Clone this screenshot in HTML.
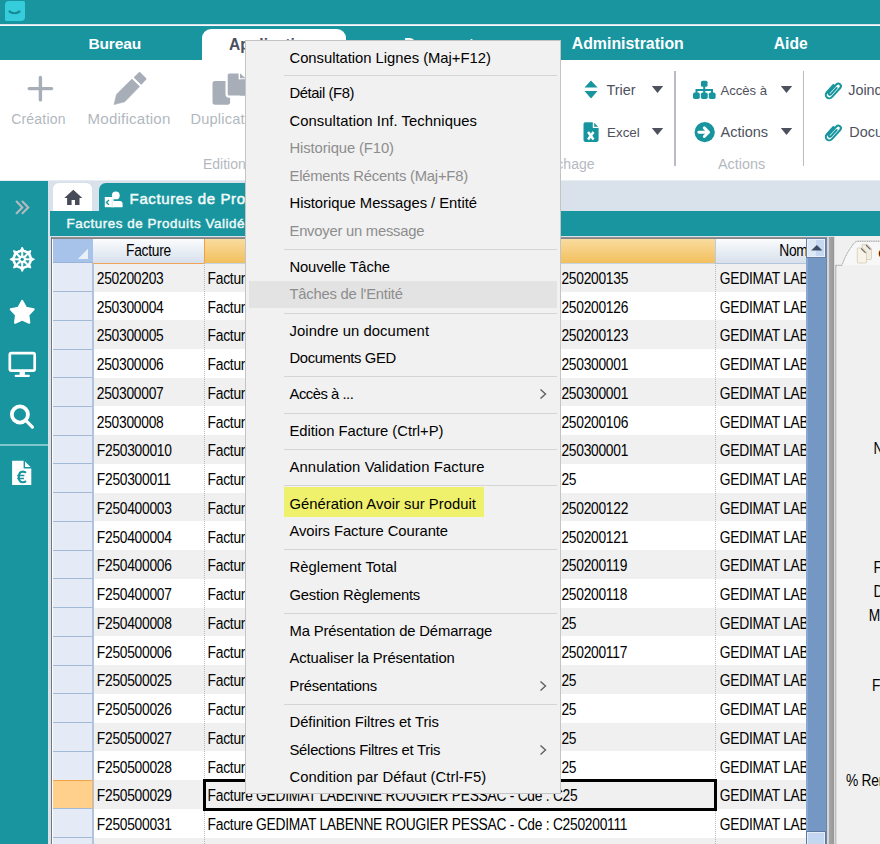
<!DOCTYPE html>
<html><head><meta charset="utf-8"><title>Factures</title>
<style>
html,body{margin:0;padding:0;}
body{width:880px;height:844px;overflow:hidden;position:relative;font-family:"Liberation Sans",sans-serif;}
.r{position:absolute;}
.t{position:absolute;white-space:pre;}
svg.r{overflow:visible;}
</style></head><body>
<div class="r" style="left:0.00px;top:0.00px;width:880.00px;height:844.00px;background:#d9e2ea;"></div>
<div class="r" style="left:0.00px;top:0.00px;width:880.00px;height:24.30px;background:#18959f;"></div>
<div class="r" style="left:4.50px;top:1.40px;width:20.00px;height:19.50px;background:#35cddb;border-radius:4px 1.5px 4px 1.5px;"></div>
<svg class="r" style="left:4px;top:1px;" width="21" height="20" viewBox="0 0 21 20"><path d="M5.5 10.5 Q10.5 14 15.5 10.5" stroke="#178a95" stroke-width="2.2" fill="none" stroke-linecap="round"/></svg>
<div class="r" style="left:0.00px;top:24.80px;width:880.00px;height:1.50px;background:#f4fafb;"></div>
<div class="r" style="left:0.00px;top:26.10px;width:880.00px;height:33.50px;background:#18959f;"></div>
<div class="t " style="top:36.08px;font-size:15.5px;line-height:15.5px;color:#ffffff;font-weight:bold;left:88.40px;letter-spacing:-0.1px;">Bureau</div>
<div class="r" style="left:201.80px;top:29.00px;width:144.60px;height:31.00px;background:#ffffff;border-radius:9px 9px 0 0;"></div>
<div class="t " style="top:36.69px;font-size:15.6px;line-height:15.6px;color:#4b4f5e;font-weight:bold;left:229.00px;">Applications</div>
<div class="t " style="top:37.39px;font-size:15.6px;line-height:15.6px;color:#ffffff;font-weight:bold;left:404.00px;letter-spacing:-0.9px;">Documents</div>
<div class="t " style="top:35.74px;font-size:15.9px;line-height:15.9px;color:#ffffff;font-weight:bold;left:571.70px;">Administration</div>
<div class="t " style="top:35.99px;font-size:15.6px;line-height:15.6px;color:#ffffff;font-weight:bold;left:773.80px;">Aide</div>
<div class="r" style="left:0.00px;top:59.60px;width:880.00px;height:120.00px;background:#ffffff;"></div>
<div class="r" style="left:0.00px;top:179.50px;width:880.00px;height:1.20px;background:#e6ecf1;"></div>
<svg class="r" style="left:24px;top:72px;" width="33" height="33" viewBox="24 72 33 33"><path d="M40.4 77.4 V99.9 M29.2 88.6 H51.6" stroke="#a7aeb8" stroke-width="3.4" stroke-linecap="round"/></svg>
<div class="t " style="top:112.15px;font-size:14.0px;line-height:14.0px;color:#b2b8c0;left:11.20px;letter-spacing:0.2px;">Création</div>
<svg class="r" style="left:108px;top:68px;" width="44" height="42" viewBox="108 68 44 42"><path d="M139.6 73 L145.6 79 L141.2 83.6 L134.9 77.4 Z" fill="#a7aeb8" stroke="#a7aeb8" stroke-width="1.8" stroke-linejoin="round"/><path d="M131.9 79.1 L139.6 86.6 L124.8 101.8 L114 104.6 L116.6 94.2 Z" fill="#a7aeb8" stroke="#a7aeb8" stroke-width="0.6" stroke-linejoin="round"/></svg>
<div class="t " style="top:111.22px;font-size:15.1px;line-height:15.1px;color:#b2b8c0;left:87.60px;letter-spacing:0.2px;">Modification</div>
<svg class="r" style="left:208px;top:68px;" width="40" height="40" viewBox="208 68 40 40"><rect x="212.5" y="81" width="17.6" height="23.7" rx="2.6" fill="#a7aeb8"/><rect x="226.6" y="72.4" width="24" height="24.2" rx="2.6" fill="#a7aeb8" stroke="#fff" stroke-width="2.2"/><path d="M238.6 70 V79.4 H252 V70 Z" fill="#fff"/><path d="M240 73.3 L245.5 78.3 H240 Z" fill="#a7aeb8"/><path d="M240.6 79.4 H252 V95.4 H240 Z" fill="#a7aeb8"/></svg>
<div class="t " style="top:111.64px;font-size:14.6px;line-height:14.6px;color:#b2b8c0;left:190.40px;letter-spacing:0.2px;">Duplication</div>
<div class="t " style="top:156.85px;font-size:14.0px;line-height:14.0px;color:#b4b9c0;left:203.00px;">Edition</div>
<div class="t " style="top:156.65px;font-size:14.0px;line-height:14.0px;color:#b4b9c0;right:285.50px;">Affichage</div>
<svg class="r" style="left:584px;top:80px;" width="14" height="19" viewBox="0 0 14 19"><path d="M7 0.5 L13.5 7.5 H0.5 Z M0.5 11 H13.5 L7 18.5 Z" fill="#17959e"/></svg>
<div class="t " style="top:82.91px;font-size:14.4px;line-height:14.4px;color:#4d515e;left:606.40px;">Trier</div>
<svg class="r" style="left:651px;top:85px;" width="13" height="9" viewBox="0 0 13 9"><path d="M0.8 1 H12.2 L6.5 8 Z" fill="#4d515e"/></svg>
<svg class="r" style="left:580px;top:119px;" width="22" height="26" viewBox="580 119 22 26"><path d="M583.5 124 Q583.5 122.2 585.3 122.2 H592.8 V127.9 H598.6 V140.1 Q598.6 141.9 596.8 141.9 H585.3 Q583.5 141.9 583.5 140.1 Z" fill="#17959e"/><path d="M594.2 122.7 L598.2 126.7 H594.2 Z" fill="#17959e"/><path d="M588.1 132 L593.5 139.5 M593.5 132 L588.1 139.5" stroke="#fff" stroke-width="2.5"/></svg>
<div class="t " style="top:125.96px;font-size:13.4px;line-height:13.4px;color:#4d515e;left:607.00px;">Excel</div>
<svg class="r" style="left:651px;top:127px;" width="13" height="9" viewBox="0 0 13 9"><path d="M0.8 1 H12.2 L6.5 8 Z" fill="#4d515e"/></svg>
<div class="r" style="left:674.00px;top:71.00px;width:1.50px;height:94.50px;background:#b9bdc3;"></div>
<svg class="r" style="left:692px;top:80px;" width="25" height="20" viewBox="0 0 25 20"><rect x="9" y="0.8" width="6.5" height="6" rx="1.5" fill="#17959e"/><path d="M12.2 6 V10 M4.5 13 V10 H20 V13 M12.2 10 V13" stroke="#17959e" stroke-width="2" fill="none"/><rect x="1" y="12.5" width="6.8" height="6.5" rx="1.8" fill="#17959e"/><rect x="8.9" y="12.5" width="6.8" height="6.5" rx="1.8" fill="#17959e"/><rect x="16.8" y="12.5" width="6.8" height="6.5" rx="1.8" fill="#17959e"/></svg>
<div class="t " style="top:84.01px;font-size:13.1px;line-height:13.1px;color:#4d515e;left:720.50px;">Accès à</div>
<svg class="r" style="left:780px;top:85px;" width="13" height="9" viewBox="0 0 13 9"><path d="M0.8 1 H12.2 L6.5 8 Z" fill="#4d515e"/></svg>
<svg class="r" style="left:692px;top:119px;" width="26" height="26" viewBox="692 119 26 26"><circle cx="704.7" cy="132.2" r="10.1" fill="#17959e"/><path d="M698.8 132.2 H708.2 M704.3 127.9 L708.6 132.2 L704.3 136.5" stroke="#fff" stroke-width="2.9" fill="none" stroke-linecap="round" stroke-linejoin="round"/></svg>
<div class="t " style="top:125.03px;font-size:14.5px;line-height:14.5px;color:#4d515e;left:720.50px;">Actions</div>
<svg class="r" style="left:780px;top:127px;" width="13" height="9" viewBox="0 0 13 9"><path d="M0.8 1 H12.2 L6.5 8 Z" fill="#4d515e"/></svg>
<div class="t " style="top:156.81px;font-size:14.4px;line-height:14.4px;color:#b4b9c0;left:718.00px;">Actions</div>
<div class="r" style="left:802.50px;top:71.00px;width:1.50px;height:94.50px;background:#b9bdc3;"></div>
<svg class="r" style="left:824px;top:79.5px;" width="19" height="21" viewBox="0 0 19 21"><g transform="translate(9.3,10.4) rotate(42) translate(0,-10.6)"><path d="M0.9 6.5 V15.2 A1.3 1.3 0 0 1 -1.7 15.2 V4.2 A2.6 2.6 0 0 1 3.5 4.2 V16.6 A3.5 3.5 0 0 1 -3.5 16.6 V6.5" stroke="#17959e" stroke-width="2" fill="none" stroke-linecap="round"/></g></svg>
<div class="t " style="top:83.31px;font-size:14.4px;line-height:14.4px;color:#4d515e;left:848.20px;">Joindre</div>
<svg class="r" style="left:824px;top:121.8px;" width="19" height="21" viewBox="0 0 19 21"><g transform="translate(9.3,10.4) rotate(42) translate(0,-10.6)"><path d="M0.9 6.5 V15.2 A1.3 1.3 0 0 1 -1.7 15.2 V4.2 A2.6 2.6 0 0 1 3.5 4.2 V16.6 A3.5 3.5 0 0 1 -3.5 16.6 V6.5" stroke="#17959e" stroke-width="2" fill="none" stroke-linecap="round"/></g></svg>
<div class="t " style="top:125.11px;font-size:14.4px;line-height:14.4px;color:#4d515e;left:849.30px;">Documents</div>
<div class="r" style="left:0.00px;top:180.70px;width:47.50px;height:663.30px;background:#18959f;"></div>
<svg class="r" style="left:12px;top:196px;" width="22" height="22" viewBox="12 196 22 22"><path d="M16.6 201.6 L22.3 207.4 L16.6 213.2 M22.5 201.6 L28.2 207.4 L22.5 213.2" stroke="#b6b9c0" stroke-width="2.1" fill="none" stroke-linecap="round"/></svg>
<svg class="r" style="left:6px;top:243px;" width="32" height="32" viewBox="6 243 32 32"><circle cx="22.2" cy="259.3" r="9.9" fill="#fff"/><path d="M34.50 259.30 L31.02 257.51 L31.02 261.09 Z M30.90 268.00 L29.70 264.27 L27.17 266.80 Z M22.20 271.60 L23.99 268.12 L20.41 268.12 Z M13.50 268.00 L17.23 266.80 L14.70 264.27 Z M9.90 259.30 L13.38 261.09 L13.38 257.51 Z M13.50 250.60 L14.70 254.33 L17.23 251.80 Z M22.20 247.00 L20.41 250.48 L23.99 250.48 Z M30.90 250.60 L27.17 251.80 L29.70 254.33 Z " fill="#fff" stroke="#fff" stroke-width="1" stroke-linejoin="round"/><path d="M25.80 260.79 L29.10 260.48 L27.92 263.34 Z M23.69 262.90 L26.24 265.02 L23.38 266.20 Z M20.71 262.90 L21.02 266.20 L18.16 265.02 Z M18.60 260.79 L16.48 263.34 L15.30 260.48 Z M18.60 257.81 L15.30 258.12 L16.48 255.26 Z M20.71 255.70 L18.16 253.58 L21.02 252.40 Z M23.69 255.70 L23.38 252.40 L26.24 253.58 Z M25.80 257.81 L27.92 255.26 L29.10 258.12 Z " fill="#18959f" stroke="#18959f" stroke-width="0.6" stroke-linejoin="round"/><circle cx="22.2" cy="259.3" r="1.6" fill="#18959f"/></svg>
<svg class="r" style="left:6px;top:296px;" width="32" height="32" viewBox="6 296 32 32"><path d="M22.20 301.00 L25.96 307.82 L33.61 309.29 L28.29 314.98 L29.25 322.71 L22.20 319.40 L15.15 322.71 L16.11 314.98 L10.79 309.29 L18.44 307.82 Z" fill="#fff" stroke="#fff" stroke-width="2.2" stroke-linejoin="round"/></svg>
<svg class="r" style="left:6px;top:348px;" width="32" height="32" viewBox="6 348 32 32"><rect x="9.8" y="353.1" width="24.9" height="17.6" rx="1.6" fill="none" stroke="#fff" stroke-width="2.7"/><rect x="19.6" y="371" width="5.3" height="4.5" fill="#fff"/><rect x="14.7" y="374.7" width="15.1" height="2.4" rx="0.8" fill="#fff"/></svg>
<svg class="r" style="left:6px;top:401px;" width="32" height="32" viewBox="6 401 32 32"><circle cx="19.9" cy="414.5" r="8.05" fill="none" stroke="#fff" stroke-width="3.8"/><path d="M25.5 420.2 L32.4 427.1" stroke="#fff" stroke-width="3.2" stroke-linecap="round"/></svg>
<div class="r" style="left:0.00px;top:444.20px;width:47.50px;height:1.40px;background:#7cc6cc;"></div>
<svg class="r" style="left:9px;top:457px;" width="26" height="31" viewBox="9 457 26 31"><path d="M12.1 460.8 H24.3 L31.3 467.8 V484.9 H12.1 Z" fill="#fff"/><path d="M24.3 460.2 V467.8 H31.9" fill="none" stroke="#18959f" stroke-width="1.4"/><path d="M26 472.8 Q24.8 471.6 22.8 471.6 Q19 471.6 18.8 477 Q19 482.3 22.8 482.3 Q24.8 482.3 26 481.1" fill="none" stroke="#18959f" stroke-width="2.1"/><path d="M17.2 475.6 H24.4 M17.2 478.4 H24" stroke="#18959f" stroke-width="1.5"/></svg>
<div class="r" style="left:52.70px;top:182.80px;width:39.00px;height:30.00px;background:#ffffff;border-radius:6px 6px 0 0;"></div>
<svg class="r" style="left:64px;top:189px;" width="19" height="17" viewBox="0 0 19 17"><path d="M9.3 0.8 L18.3 9 H15.5 V16 H11 V11 H7.6 V16 H3.1 V9 H0.3 Z" fill="#474b58"/></svg>
<div class="r" style="left:98.70px;top:182.50px;width:300.00px;height:30.00px;background:#18959f;border-radius:7px 7px 0 0;"></div>
<svg class="r" style="left:102px;top:188px;" width="24" height="22" viewBox="102 188 24 22"><circle cx="115.8" cy="195.4" r="3.9" fill="#fff"/><path d="M111.2 207.2 V203.5 Q111.2 201 113.7 201 H119.8 Q122.6 201 122.6 204 V207.2 Z" fill="#fff"/><rect x="104.8" y="197" width="8.8" height="10.2" fill="#fff"/><path d="M109 200 L106.4 202.4 L109 204.8" stroke="#18959f" stroke-width="1.3" fill="none"/><path d="M112.2 199 V207" stroke="#cfe9eb" stroke-width="0.8"/></svg>
<div class="t " style="top:190.90px;font-size:15.0px;line-height:15.0px;color:#f0fafa;left:129.60px;-webkit-text-stroke:0.5px #f0fafa;letter-spacing:0.62px;">Factures de Produits Validées</div>
<div class="r" style="left:50.00px;top:211.00px;width:830.00px;height:24.70px;background:#18959f;"></div>
<div class="t " style="top:217.26px;font-size:13.4px;line-height:13.4px;color:#eef8f8;left:66.60px;-webkit-text-stroke:0.45px #eef8f8;letter-spacing:0.55px;">Factures de Produits Validées</div>
<div class="r" style="left:51.00px;top:237.00px;width:776.00px;height:607.00px;background:#ffffff;"></div>
<div class="r" style="left:51.00px;top:237.00px;width:776.00px;height:2.00px;background:linear-gradient(#9a9a9a,#7e7e7e);"></div>
<div class="r" style="left:51.20px;top:237.00px;width:1.30px;height:607.00px;background:#767676;"></div>
<div class="r" style="left:52.60px;top:239.00px;width:40.40px;height:23.90px;background:#a7c3e9;"></div>
<svg class="r" style="left:77px;top:247.5px;" width="12" height="12" viewBox="0 0 12 12"><path d="M11 0.8 V11 H0.8 Z" fill="#e9f0f9"/></svg>
<div class="r" style="left:93.00px;top:239.00px;width:111.00px;height:23.70px;background:linear-gradient(#fbfcfe,#d7e0eb);"></div>
<div class="t " style="top:244.52px;font-size:13.8px;line-height:13.8px;color:#000;left:-151.50px;width:600px;text-align:center;letter-spacing:-0.26px;transform:scaleY(1.15);transform-origin:0 11.68px;">Facture</div>
<div class="r" style="left:204.00px;top:239.00px;width:511.00px;height:23.70px;background:linear-gradient(#fadc9f,#f2bf5d);"></div>
<div class="r" style="left:203.70px;top:239.00px;width:1.30px;height:24.50px;background:#f0a040;"></div>
<div class="r" style="left:715.00px;top:239.00px;width:91.50px;height:23.70px;background:linear-gradient(#fbfcfe,#d7e0eb);"></div>
<div class="r" style="left:715.00px;top:239.00px;width:1.10px;height:23.70px;background:#b9cde1;"></div>
<div class="t " style="top:244.52px;font-size:13.8px;line-height:13.8px;color:#000;right:72.40px;letter-spacing:-0.26px;transform:scaleY(1.15);transform-origin:0 11.68px;">Nom</div>
<div class="r" style="left:93.60px;top:262.80px;width:712.90px;height:28.74px;background:#f0f0f0;"></div>
<div class="r" style="left:52.60px;top:262.80px;width:40.00px;height:28.74px;background:#e4ebf6;"></div>
<div class="t " style="top:272.92px;font-size:13.8px;line-height:13.8px;color:#000;left:96.80px;letter-spacing:-0.26px;transform:scaleY(1.15);transform-origin:0 11.68px;">250200203</div>
<div class="t " style="top:272.92px;font-size:13.8px;line-height:13.8px;color:#000;left:207.60px;letter-spacing:-0.26px;transform:scaleY(1.15);transform-origin:0 11.68px;">Facture GEDIMAT</div>
<div class="t " style="top:272.92px;font-size:13.8px;line-height:13.8px;color:#000;left:561.40px;letter-spacing:-0.26px;transform:scaleY(1.15);transform-origin:0 11.68px;">250200135</div>
<div class="t " style="top:272.92px;font-size:13.8px;line-height:13.8px;color:#000;left:719.80px;letter-spacing:-0.26px;transform:scaleY(1.15);transform-origin:0 11.68px;width:86px;overflow:hidden;white-space:nowrap;">GEDIMAT LABENNE</div>
<div class="r" style="left:93.60px;top:291.54px;width:712.90px;height:28.74px;background:#ffffff;"></div>
<div class="r" style="left:52.60px;top:291.54px;width:40.00px;height:28.74px;background:#e4ebf6;"></div>
<div class="t " style="top:301.66px;font-size:13.8px;line-height:13.8px;color:#000;left:96.80px;letter-spacing:-0.26px;transform:scaleY(1.15);transform-origin:0 11.68px;">250300004</div>
<div class="t " style="top:301.66px;font-size:13.8px;line-height:13.8px;color:#000;left:207.60px;letter-spacing:-0.26px;transform:scaleY(1.15);transform-origin:0 11.68px;">Facture GEDIMAT</div>
<div class="t " style="top:301.66px;font-size:13.8px;line-height:13.8px;color:#000;left:561.40px;letter-spacing:-0.26px;transform:scaleY(1.15);transform-origin:0 11.68px;">250200126</div>
<div class="t " style="top:301.66px;font-size:13.8px;line-height:13.8px;color:#000;left:719.80px;letter-spacing:-0.26px;transform:scaleY(1.15);transform-origin:0 11.68px;width:86px;overflow:hidden;white-space:nowrap;">GEDIMAT LABENNE</div>
<div class="r" style="left:93.60px;top:320.28px;width:712.90px;height:28.74px;background:#f0f0f0;"></div>
<div class="r" style="left:52.60px;top:320.28px;width:40.00px;height:28.74px;background:#e4ebf6;"></div>
<div class="t " style="top:330.40px;font-size:13.8px;line-height:13.8px;color:#000;left:96.80px;letter-spacing:-0.26px;transform:scaleY(1.15);transform-origin:0 11.68px;">250300005</div>
<div class="t " style="top:330.40px;font-size:13.8px;line-height:13.8px;color:#000;left:207.60px;letter-spacing:-0.26px;transform:scaleY(1.15);transform-origin:0 11.68px;">Facture GEDIMAT</div>
<div class="t " style="top:330.40px;font-size:13.8px;line-height:13.8px;color:#000;left:561.40px;letter-spacing:-0.26px;transform:scaleY(1.15);transform-origin:0 11.68px;">250200123</div>
<div class="t " style="top:330.40px;font-size:13.8px;line-height:13.8px;color:#000;left:719.80px;letter-spacing:-0.26px;transform:scaleY(1.15);transform-origin:0 11.68px;width:86px;overflow:hidden;white-space:nowrap;">GEDIMAT LABENNE</div>
<div class="r" style="left:93.60px;top:349.02px;width:712.90px;height:28.74px;background:#ffffff;"></div>
<div class="r" style="left:52.60px;top:349.02px;width:40.00px;height:28.74px;background:#e4ebf6;"></div>
<div class="t " style="top:359.14px;font-size:13.8px;line-height:13.8px;color:#000;left:96.80px;letter-spacing:-0.26px;transform:scaleY(1.15);transform-origin:0 11.68px;">250300006</div>
<div class="t " style="top:359.14px;font-size:13.8px;line-height:13.8px;color:#000;left:207.60px;letter-spacing:-0.26px;transform:scaleY(1.15);transform-origin:0 11.68px;">Facture GEDIMAT</div>
<div class="t " style="top:359.14px;font-size:13.8px;line-height:13.8px;color:#000;left:561.40px;letter-spacing:-0.26px;transform:scaleY(1.15);transform-origin:0 11.68px;">250300001</div>
<div class="t " style="top:359.14px;font-size:13.8px;line-height:13.8px;color:#000;left:719.80px;letter-spacing:-0.26px;transform:scaleY(1.15);transform-origin:0 11.68px;width:86px;overflow:hidden;white-space:nowrap;">GEDIMAT LABENNE</div>
<div class="r" style="left:93.60px;top:377.76px;width:712.90px;height:28.74px;background:#f0f0f0;"></div>
<div class="r" style="left:52.60px;top:377.76px;width:40.00px;height:28.74px;background:#e4ebf6;"></div>
<div class="t " style="top:387.88px;font-size:13.8px;line-height:13.8px;color:#000;left:96.80px;letter-spacing:-0.26px;transform:scaleY(1.15);transform-origin:0 11.68px;">250300007</div>
<div class="t " style="top:387.88px;font-size:13.8px;line-height:13.8px;color:#000;left:207.60px;letter-spacing:-0.26px;transform:scaleY(1.15);transform-origin:0 11.68px;">Facture GEDIMAT</div>
<div class="t " style="top:387.88px;font-size:13.8px;line-height:13.8px;color:#000;left:561.40px;letter-spacing:-0.26px;transform:scaleY(1.15);transform-origin:0 11.68px;">250300001</div>
<div class="t " style="top:387.88px;font-size:13.8px;line-height:13.8px;color:#000;left:719.80px;letter-spacing:-0.26px;transform:scaleY(1.15);transform-origin:0 11.68px;width:86px;overflow:hidden;white-space:nowrap;">GEDIMAT LABENNE</div>
<div class="r" style="left:93.60px;top:406.50px;width:712.90px;height:28.74px;background:#ffffff;"></div>
<div class="r" style="left:52.60px;top:406.50px;width:40.00px;height:28.74px;background:#e4ebf6;"></div>
<div class="t " style="top:416.62px;font-size:13.8px;line-height:13.8px;color:#000;left:96.80px;letter-spacing:-0.26px;transform:scaleY(1.15);transform-origin:0 11.68px;">250300008</div>
<div class="t " style="top:416.62px;font-size:13.8px;line-height:13.8px;color:#000;left:207.60px;letter-spacing:-0.26px;transform:scaleY(1.15);transform-origin:0 11.68px;">Facture GEDIMAT</div>
<div class="t " style="top:416.62px;font-size:13.8px;line-height:13.8px;color:#000;left:561.40px;letter-spacing:-0.26px;transform:scaleY(1.15);transform-origin:0 11.68px;">250200106</div>
<div class="t " style="top:416.62px;font-size:13.8px;line-height:13.8px;color:#000;left:719.80px;letter-spacing:-0.26px;transform:scaleY(1.15);transform-origin:0 11.68px;width:86px;overflow:hidden;white-space:nowrap;">GEDIMAT LABENNE</div>
<div class="r" style="left:93.60px;top:435.24px;width:712.90px;height:28.74px;background:#f0f0f0;"></div>
<div class="r" style="left:52.60px;top:435.24px;width:40.00px;height:28.74px;background:#e4ebf6;"></div>
<div class="t " style="top:445.36px;font-size:13.8px;line-height:13.8px;color:#000;left:96.80px;letter-spacing:-0.26px;transform:scaleY(1.15);transform-origin:0 11.68px;">F250300010</div>
<div class="t " style="top:445.36px;font-size:13.8px;line-height:13.8px;color:#000;left:207.60px;letter-spacing:-0.26px;transform:scaleY(1.15);transform-origin:0 11.68px;">Facture GEDIMAT</div>
<div class="t " style="top:445.36px;font-size:13.8px;line-height:13.8px;color:#000;left:561.40px;letter-spacing:-0.26px;transform:scaleY(1.15);transform-origin:0 11.68px;">250300001</div>
<div class="t " style="top:445.36px;font-size:13.8px;line-height:13.8px;color:#000;left:719.80px;letter-spacing:-0.26px;transform:scaleY(1.15);transform-origin:0 11.68px;width:86px;overflow:hidden;white-space:nowrap;">GEDIMAT LABENNE</div>
<div class="r" style="left:93.60px;top:463.98px;width:712.90px;height:28.74px;background:#ffffff;"></div>
<div class="r" style="left:52.60px;top:463.98px;width:40.00px;height:28.74px;background:#e4ebf6;"></div>
<div class="t " style="top:474.10px;font-size:13.8px;line-height:13.8px;color:#000;left:96.80px;letter-spacing:-0.26px;transform:scaleY(1.15);transform-origin:0 11.68px;">F250300011</div>
<div class="t " style="top:474.10px;font-size:13.8px;line-height:13.8px;color:#000;left:207.60px;letter-spacing:-0.26px;transform:scaleY(1.15);transform-origin:0 11.68px;">Facture GEDIMAT</div>
<div class="t " style="top:474.10px;font-size:13.8px;line-height:13.8px;color:#000;left:561.40px;letter-spacing:-0.26px;transform:scaleY(1.15);transform-origin:0 11.68px;">25</div>
<div class="t " style="top:474.10px;font-size:13.8px;line-height:13.8px;color:#000;left:719.80px;letter-spacing:-0.26px;transform:scaleY(1.15);transform-origin:0 11.68px;width:86px;overflow:hidden;white-space:nowrap;">GEDIMAT LABENNE</div>
<div class="r" style="left:93.60px;top:492.72px;width:712.90px;height:28.74px;background:#f0f0f0;"></div>
<div class="r" style="left:52.60px;top:492.72px;width:40.00px;height:28.74px;background:#e4ebf6;"></div>
<div class="t " style="top:502.84px;font-size:13.8px;line-height:13.8px;color:#000;left:96.80px;letter-spacing:-0.26px;transform:scaleY(1.15);transform-origin:0 11.68px;">F250400003</div>
<div class="t " style="top:502.84px;font-size:13.8px;line-height:13.8px;color:#000;left:207.60px;letter-spacing:-0.26px;transform:scaleY(1.15);transform-origin:0 11.68px;">Facture GEDIMAT</div>
<div class="t " style="top:502.84px;font-size:13.8px;line-height:13.8px;color:#000;left:561.40px;letter-spacing:-0.26px;transform:scaleY(1.15);transform-origin:0 11.68px;">250200122</div>
<div class="t " style="top:502.84px;font-size:13.8px;line-height:13.8px;color:#000;left:719.80px;letter-spacing:-0.26px;transform:scaleY(1.15);transform-origin:0 11.68px;width:86px;overflow:hidden;white-space:nowrap;">GEDIMAT LABENNE</div>
<div class="r" style="left:93.60px;top:521.46px;width:712.90px;height:28.74px;background:#ffffff;"></div>
<div class="r" style="left:52.60px;top:521.46px;width:40.00px;height:28.74px;background:#e4ebf6;"></div>
<div class="t " style="top:531.58px;font-size:13.8px;line-height:13.8px;color:#000;left:96.80px;letter-spacing:-0.26px;transform:scaleY(1.15);transform-origin:0 11.68px;">F250400004</div>
<div class="t " style="top:531.58px;font-size:13.8px;line-height:13.8px;color:#000;left:207.60px;letter-spacing:-0.26px;transform:scaleY(1.15);transform-origin:0 11.68px;">Facture GEDIMAT</div>
<div class="t " style="top:531.58px;font-size:13.8px;line-height:13.8px;color:#000;left:561.40px;letter-spacing:-0.26px;transform:scaleY(1.15);transform-origin:0 11.68px;">250200121</div>
<div class="t " style="top:531.58px;font-size:13.8px;line-height:13.8px;color:#000;left:719.80px;letter-spacing:-0.26px;transform:scaleY(1.15);transform-origin:0 11.68px;width:86px;overflow:hidden;white-space:nowrap;">GEDIMAT LABENNE</div>
<div class="r" style="left:93.60px;top:550.20px;width:712.90px;height:28.74px;background:#f0f0f0;"></div>
<div class="r" style="left:52.60px;top:550.20px;width:40.00px;height:28.74px;background:#e4ebf6;"></div>
<div class="t " style="top:560.32px;font-size:13.8px;line-height:13.8px;color:#000;left:96.80px;letter-spacing:-0.26px;transform:scaleY(1.15);transform-origin:0 11.68px;">F250400006</div>
<div class="t " style="top:560.32px;font-size:13.8px;line-height:13.8px;color:#000;left:207.60px;letter-spacing:-0.26px;transform:scaleY(1.15);transform-origin:0 11.68px;">Facture GEDIMAT</div>
<div class="t " style="top:560.32px;font-size:13.8px;line-height:13.8px;color:#000;left:561.40px;letter-spacing:-0.26px;transform:scaleY(1.15);transform-origin:0 11.68px;">250200119</div>
<div class="t " style="top:560.32px;font-size:13.8px;line-height:13.8px;color:#000;left:719.80px;letter-spacing:-0.26px;transform:scaleY(1.15);transform-origin:0 11.68px;width:86px;overflow:hidden;white-space:nowrap;">GEDIMAT LABENNE</div>
<div class="r" style="left:93.60px;top:578.94px;width:712.90px;height:28.74px;background:#ffffff;"></div>
<div class="r" style="left:52.60px;top:578.94px;width:40.00px;height:28.74px;background:#e4ebf6;"></div>
<div class="t " style="top:589.06px;font-size:13.8px;line-height:13.8px;color:#000;left:96.80px;letter-spacing:-0.26px;transform:scaleY(1.15);transform-origin:0 11.68px;">F250400007</div>
<div class="t " style="top:589.06px;font-size:13.8px;line-height:13.8px;color:#000;left:207.60px;letter-spacing:-0.26px;transform:scaleY(1.15);transform-origin:0 11.68px;">Facture GEDIMAT</div>
<div class="t " style="top:589.06px;font-size:13.8px;line-height:13.8px;color:#000;left:561.40px;letter-spacing:-0.26px;transform:scaleY(1.15);transform-origin:0 11.68px;">250200118</div>
<div class="t " style="top:589.06px;font-size:13.8px;line-height:13.8px;color:#000;left:719.80px;letter-spacing:-0.26px;transform:scaleY(1.15);transform-origin:0 11.68px;width:86px;overflow:hidden;white-space:nowrap;">GEDIMAT LABENNE</div>
<div class="r" style="left:93.60px;top:607.68px;width:712.90px;height:28.74px;background:#f0f0f0;"></div>
<div class="r" style="left:52.60px;top:607.68px;width:40.00px;height:28.74px;background:#e4ebf6;"></div>
<div class="t " style="top:617.80px;font-size:13.8px;line-height:13.8px;color:#000;left:96.80px;letter-spacing:-0.26px;transform:scaleY(1.15);transform-origin:0 11.68px;">F250400008</div>
<div class="t " style="top:617.80px;font-size:13.8px;line-height:13.8px;color:#000;left:207.60px;letter-spacing:-0.26px;transform:scaleY(1.15);transform-origin:0 11.68px;">Facture GEDIMAT</div>
<div class="t " style="top:617.80px;font-size:13.8px;line-height:13.8px;color:#000;left:561.40px;letter-spacing:-0.26px;transform:scaleY(1.15);transform-origin:0 11.68px;">25</div>
<div class="t " style="top:617.80px;font-size:13.8px;line-height:13.8px;color:#000;left:719.80px;letter-spacing:-0.26px;transform:scaleY(1.15);transform-origin:0 11.68px;width:86px;overflow:hidden;white-space:nowrap;">GEDIMAT LABENNE</div>
<div class="r" style="left:93.60px;top:636.42px;width:712.90px;height:28.74px;background:#ffffff;"></div>
<div class="r" style="left:52.60px;top:636.42px;width:40.00px;height:28.74px;background:#e4ebf6;"></div>
<div class="t " style="top:646.54px;font-size:13.8px;line-height:13.8px;color:#000;left:96.80px;letter-spacing:-0.26px;transform:scaleY(1.15);transform-origin:0 11.68px;">F250500006</div>
<div class="t " style="top:646.54px;font-size:13.8px;line-height:13.8px;color:#000;left:207.60px;letter-spacing:-0.26px;transform:scaleY(1.15);transform-origin:0 11.68px;">Facture GEDIMAT</div>
<div class="t " style="top:646.54px;font-size:13.8px;line-height:13.8px;color:#000;left:561.40px;letter-spacing:-0.26px;transform:scaleY(1.15);transform-origin:0 11.68px;">250200117</div>
<div class="t " style="top:646.54px;font-size:13.8px;line-height:13.8px;color:#000;left:719.80px;letter-spacing:-0.26px;transform:scaleY(1.15);transform-origin:0 11.68px;width:86px;overflow:hidden;white-space:nowrap;">GEDIMAT LABENNE</div>
<div class="r" style="left:93.60px;top:665.16px;width:712.90px;height:28.74px;background:#f0f0f0;"></div>
<div class="r" style="left:52.60px;top:665.16px;width:40.00px;height:28.74px;background:#e4ebf6;"></div>
<div class="t " style="top:675.28px;font-size:13.8px;line-height:13.8px;color:#000;left:96.80px;letter-spacing:-0.26px;transform:scaleY(1.15);transform-origin:0 11.68px;">F250500025</div>
<div class="t " style="top:675.28px;font-size:13.8px;line-height:13.8px;color:#000;left:207.60px;letter-spacing:-0.26px;transform:scaleY(1.15);transform-origin:0 11.68px;">Facture GEDIMAT</div>
<div class="t " style="top:675.28px;font-size:13.8px;line-height:13.8px;color:#000;left:561.40px;letter-spacing:-0.26px;transform:scaleY(1.15);transform-origin:0 11.68px;">25</div>
<div class="t " style="top:675.28px;font-size:13.8px;line-height:13.8px;color:#000;left:719.80px;letter-spacing:-0.26px;transform:scaleY(1.15);transform-origin:0 11.68px;width:86px;overflow:hidden;white-space:nowrap;">GEDIMAT LABENNE</div>
<div class="r" style="left:93.60px;top:693.90px;width:712.90px;height:28.74px;background:#ffffff;"></div>
<div class="r" style="left:52.60px;top:693.90px;width:40.00px;height:28.74px;background:#e4ebf6;"></div>
<div class="t " style="top:704.02px;font-size:13.8px;line-height:13.8px;color:#000;left:96.80px;letter-spacing:-0.26px;transform:scaleY(1.15);transform-origin:0 11.68px;">F250500026</div>
<div class="t " style="top:704.02px;font-size:13.8px;line-height:13.8px;color:#000;left:207.60px;letter-spacing:-0.26px;transform:scaleY(1.15);transform-origin:0 11.68px;">Facture GEDIMAT</div>
<div class="t " style="top:704.02px;font-size:13.8px;line-height:13.8px;color:#000;left:561.40px;letter-spacing:-0.26px;transform:scaleY(1.15);transform-origin:0 11.68px;">25</div>
<div class="t " style="top:704.02px;font-size:13.8px;line-height:13.8px;color:#000;left:719.80px;letter-spacing:-0.26px;transform:scaleY(1.15);transform-origin:0 11.68px;width:86px;overflow:hidden;white-space:nowrap;">GEDIMAT LABENNE</div>
<div class="r" style="left:93.60px;top:722.64px;width:712.90px;height:28.74px;background:#f0f0f0;"></div>
<div class="r" style="left:52.60px;top:722.64px;width:40.00px;height:28.74px;background:#e4ebf6;"></div>
<div class="t " style="top:732.76px;font-size:13.8px;line-height:13.8px;color:#000;left:96.80px;letter-spacing:-0.26px;transform:scaleY(1.15);transform-origin:0 11.68px;">F250500027</div>
<div class="t " style="top:732.76px;font-size:13.8px;line-height:13.8px;color:#000;left:207.60px;letter-spacing:-0.26px;transform:scaleY(1.15);transform-origin:0 11.68px;">Facture GEDIMAT</div>
<div class="t " style="top:732.76px;font-size:13.8px;line-height:13.8px;color:#000;left:561.40px;letter-spacing:-0.26px;transform:scaleY(1.15);transform-origin:0 11.68px;">25</div>
<div class="t " style="top:732.76px;font-size:13.8px;line-height:13.8px;color:#000;left:719.80px;letter-spacing:-0.26px;transform:scaleY(1.15);transform-origin:0 11.68px;width:86px;overflow:hidden;white-space:nowrap;">GEDIMAT LABENNE</div>
<div class="r" style="left:93.60px;top:751.38px;width:712.90px;height:28.74px;background:#ffffff;"></div>
<div class="r" style="left:52.60px;top:751.38px;width:40.00px;height:28.74px;background:#e4ebf6;"></div>
<div class="t " style="top:761.50px;font-size:13.8px;line-height:13.8px;color:#000;left:96.80px;letter-spacing:-0.26px;transform:scaleY(1.15);transform-origin:0 11.68px;">F250500028</div>
<div class="t " style="top:761.50px;font-size:13.8px;line-height:13.8px;color:#000;left:207.60px;letter-spacing:-0.26px;transform:scaleY(1.15);transform-origin:0 11.68px;">Facture GEDIMAT</div>
<div class="t " style="top:761.50px;font-size:13.8px;line-height:13.8px;color:#000;left:561.40px;letter-spacing:-0.26px;transform:scaleY(1.15);transform-origin:0 11.68px;">25</div>
<div class="t " style="top:761.50px;font-size:13.8px;line-height:13.8px;color:#000;left:719.80px;letter-spacing:-0.26px;transform:scaleY(1.15);transform-origin:0 11.68px;width:86px;overflow:hidden;white-space:nowrap;">GEDIMAT LABENNE</div>
<div class="r" style="left:93.60px;top:780.12px;width:712.90px;height:28.74px;background:#f0f0f0;"></div>
<div class="r" style="left:52.60px;top:780.12px;width:40.00px;height:28.74px;background:#ffd08c;"></div>
<div class="t " style="top:790.24px;font-size:13.8px;line-height:13.8px;color:#000;left:96.80px;letter-spacing:-0.26px;transform:scaleY(1.15);transform-origin:0 11.68px;">F250500029</div>
<div class="t " style="top:790.24px;font-size:13.8px;line-height:13.8px;color:#000;left:207.60px;letter-spacing:-0.26px;transform:scaleY(1.15);transform-origin:0 11.68px;">Facture GEDIMAT LABENNE ROUGIER PESSAC - Cde : C25</div>
<div class="t " style="top:790.24px;font-size:13.8px;line-height:13.8px;color:#000;left:719.80px;letter-spacing:-0.26px;transform:scaleY(1.15);transform-origin:0 11.68px;width:86px;overflow:hidden;white-space:nowrap;">GEDIMAT LABENNE</div>
<div class="r" style="left:93.60px;top:808.86px;width:712.90px;height:28.74px;background:#ffffff;"></div>
<div class="r" style="left:52.60px;top:808.86px;width:40.00px;height:28.74px;background:#e4ebf6;"></div>
<div class="t " style="top:818.98px;font-size:13.8px;line-height:13.8px;color:#000;left:96.80px;letter-spacing:-0.26px;transform:scaleY(1.15);transform-origin:0 11.68px;">F250500031</div>
<div class="t " style="top:818.98px;font-size:13.8px;line-height:13.8px;color:#000;left:207.60px;letter-spacing:-0.26px;transform:scaleY(1.15);transform-origin:0 11.68px;">Facture GEDIMAT LABENNE ROUGIER PESSAC - Cde : C250200111</div>
<div class="t " style="top:818.98px;font-size:13.8px;line-height:13.8px;color:#000;left:719.80px;letter-spacing:-0.26px;transform:scaleY(1.15);transform-origin:0 11.68px;width:86px;overflow:hidden;white-space:nowrap;">GEDIMAT LABENNE</div>
<div class="r" style="left:93.60px;top:837.60px;width:712.90px;height:28.74px;background:#f0f0f0;"></div>
<div class="r" style="left:52.60px;top:837.60px;width:40.00px;height:28.74px;background:#e4ebf6;"></div>
<div class="t " style="top:847.72px;font-size:13.8px;line-height:13.8px;color:#000;left:96.80px;letter-spacing:-0.26px;transform:scaleY(1.15);transform-origin:0 11.68px;">F250500032</div>
<div class="t " style="top:847.72px;font-size:13.8px;line-height:13.8px;color:#000;left:207.60px;letter-spacing:-0.26px;transform:scaleY(1.15);transform-origin:0 11.68px;">Facture GEDIMAT LABENNE ROUGIER PESSAC - Cde : C250200110</div>
<div class="t " style="top:847.72px;font-size:13.8px;line-height:13.8px;color:#000;left:719.80px;letter-spacing:-0.26px;transform:scaleY(1.15);transform-origin:0 11.68px;width:86px;overflow:hidden;white-space:nowrap;">GEDIMAT LABENNE</div>
<div class="r" style="left:52.60px;top:291.00px;width:40.60px;height:1.00px;background:#a3b9d8;"></div>
<div class="r" style="left:52.60px;top:320.00px;width:40.60px;height:1.00px;background:#a3b9d8;"></div>
<div class="r" style="left:52.60px;top:349.00px;width:40.60px;height:1.00px;background:#a3b9d8;"></div>
<div class="r" style="left:52.60px;top:377.00px;width:40.60px;height:1.00px;background:#a3b9d8;"></div>
<div class="r" style="left:52.60px;top:406.00px;width:40.60px;height:1.00px;background:#a3b9d8;"></div>
<div class="r" style="left:52.60px;top:435.00px;width:40.60px;height:1.00px;background:#a3b9d8;"></div>
<div class="r" style="left:52.60px;top:463.00px;width:40.60px;height:1.00px;background:#a3b9d8;"></div>
<div class="r" style="left:52.60px;top:492.00px;width:40.60px;height:1.00px;background:#a3b9d8;"></div>
<div class="r" style="left:52.60px;top:521.00px;width:40.60px;height:1.00px;background:#a3b9d8;"></div>
<div class="r" style="left:52.60px;top:550.00px;width:40.60px;height:1.00px;background:#a3b9d8;"></div>
<div class="r" style="left:52.60px;top:578.00px;width:40.60px;height:1.00px;background:#a3b9d8;"></div>
<div class="r" style="left:52.60px;top:607.00px;width:40.60px;height:1.00px;background:#a3b9d8;"></div>
<div class="r" style="left:52.60px;top:636.00px;width:40.60px;height:1.00px;background:#a3b9d8;"></div>
<div class="r" style="left:52.60px;top:665.00px;width:40.60px;height:1.00px;background:#a3b9d8;"></div>
<div class="r" style="left:52.60px;top:693.00px;width:40.60px;height:1.00px;background:#a3b9d8;"></div>
<div class="r" style="left:52.60px;top:722.00px;width:40.60px;height:1.00px;background:#a3b9d8;"></div>
<div class="r" style="left:52.60px;top:751.00px;width:40.60px;height:1.00px;background:#a3b9d8;"></div>
<div class="r" style="left:52.60px;top:780.00px;width:40.60px;height:1.00px;background:#a3b9d8;"></div>
<div class="r" style="left:52.60px;top:808.00px;width:40.60px;height:1.00px;background:#a3b9d8;"></div>
<div class="r" style="left:52.60px;top:837.00px;width:40.60px;height:1.00px;background:#a3b9d8;"></div>
<div class="r" style="left:52.60px;top:866.00px;width:40.60px;height:1.00px;background:#a3b9d8;"></div>
<div class="r" style="left:92.40px;top:263.00px;width:1.20px;height:581.00px;background:#afc4df;"></div>
<div class="r" style="left:52.60px;top:261.90px;width:40.40px;height:1.10px;background:#98b3d9;"></div>
<div class="r" style="left:93.00px;top:262.70px;width:111.00px;height:1.30px;background:#f1a554;"></div>
<div class="r" style="left:52.60px;top:780.00px;width:40.40px;height:1.20px;background:#f4a346;"></div>
<div class="r" style="left:92.20px;top:780.12px;width:1.20px;height:28.74px;background:#f6b266;"></div>
<div class="r" style="left:204.00px;top:262.70px;width:511.00px;height:1.30px;background:#c6d4e3;"></div>
<div class="r" style="left:715.00px;top:262.70px;width:91.50px;height:1.30px;background:#b2c5dc;"></div>
<div class="r" style="left:204.2px;top:263px;width:0;height:581px;border-left:1px dotted #b8b8b8;"></div>
<div class="r" style="left:715.2px;top:263px;width:0;height:581px;border-left:1px dotted #b8b8b8;"></div>
<div class="r" style="left:203.00px;top:779.10px;width:514.30px;height:31.90px;background:transparent;border:3px solid #000;box-sizing:border-box;"></div>
<div class="r" style="left:806.40px;top:239.00px;width:19.80px;height:605.00px;background:#7498c3;"></div>
<div class="r" style="left:806.40px;top:239.00px;width:1.20px;height:605.00px;background:#86a8d2;"></div>
<div class="r" style="left:806.30px;top:237.60px;width:19.90px;height:20.60px;background:linear-gradient(90deg,#dde8f6 50%,#c5d8f0 50%);border:1px solid #6780a8;box-shadow:inset 0 0 0 1px #eaf1fb;box-sizing:border-box;"></div>
<svg class="r" style="left:808px;top:240px;" width="18" height="14" viewBox="808 240 18 14"><path d="M811.2 250.6 L816.8 244.9 L822.4 250.6 Z" fill="#404c66"/></svg>
<div class="r" style="left:806.30px;top:830.80px;width:19.90px;height:20.00px;background:#c3d7f0;border:1px solid #5f78a0;box-shadow:inset 0 0 0 1px #e4eefa;box-sizing:border-box;"></div>
<div class="r" style="left:826.00px;top:237.00px;width:1.00px;height:607.00px;background:#6a86ad;"></div>
<div class="r" style="left:827.00px;top:237.00px;width:2.20px;height:607.00px;background:#d6d6d6;"></div>
<div class="r" style="left:829.20px;top:237.00px;width:4.60px;height:607.00px;background:linear-gradient(90deg,#a6a6a6,#979797);"></div>
<div class="r" style="left:833.80px;top:237.00px;width:1.40px;height:607.00px;background:#dcdcdc;"></div>
<div class="r" style="left:835.20px;top:236.00px;width:44.80px;height:608.00px;background:#f0f0f0;"></div>
<svg class="r" style="left:834px;top:238px;" width="46" height="32" viewBox="834 238 46 32"><path d="M835.8 265.3 H842 Q846 254 851 247.5 Q854.5 241.2 858 241.2 H881 V265.3 Z" fill="#f7f7f7"/><path d="M835.8 265.3 H842 Q846 254 851 247.5 Q854.5 241.2 858 241.2 H881" fill="none" stroke="#8a8a8a" stroke-width="0.9" stroke-dasharray="1.2 0.6"/><path d="M835.8 265.3 V844" stroke="#a8a8a8" stroke-width="1"/></svg>
<svg class="r" style="left:855px;top:243px;" width="19" height="21" viewBox="855 243 19 21"><path d="M862.2 244.5 H867.5 L871.5 248.5 V258.5 Q871.5 259.5 870.5 259.5 H862.2 Z" fill="#f3eee0" stroke="#cfc5b2" stroke-width="0.7"/><path d="M857.3 248 H862.5 L866.5 252 V262 Q866.5 263 865.5 263 H858.3 Q857.3 263 857.3 262 Z" fill="#f7f3e6" stroke="#cfc5b2" stroke-width="0.7"/><path d="M866 245 L870.5 249.5 M861.2 248.5 L865.6 252.8" stroke="#6a6a6a" stroke-width="1.1"/></svg>
<div class="t " style="top:246.54px;font-size:13.3px;line-height:13.3px;color:#5a1a08;font-weight:bold;left:878.30px;">C</div>
<div class="t " style="top:443.32px;font-size:13.8px;line-height:13.8px;color:#000;left:873.50px;white-space:nowrap;letter-spacing:-0.26px;transform:scaleY(1.15);transform-origin:0 11.68px;">N° Pièce</div>
<div class="t " style="top:561.62px;font-size:13.8px;line-height:13.8px;color:#000;left:873.50px;white-space:nowrap;letter-spacing:-0.26px;transform:scaleY(1.15);transform-origin:0 11.68px;">Fournisseur</div>
<div class="t " style="top:586.12px;font-size:13.8px;line-height:13.8px;color:#000;left:873.50px;white-space:nowrap;letter-spacing:-0.26px;transform:scaleY(1.15);transform-origin:0 11.68px;">Date</div>
<div class="t " style="top:609.62px;font-size:13.8px;line-height:13.8px;color:#000;left:868.70px;white-space:nowrap;letter-spacing:-0.26px;transform:scaleY(1.15);transform-origin:0 11.68px;">Montant</div>
<div class="t " style="top:680.32px;font-size:13.8px;line-height:13.8px;color:#000;left:872.00px;white-space:nowrap;letter-spacing:-0.26px;transform:scaleY(1.15);transform-origin:0 11.68px;">Frais</div>
<div class="t " style="top:774.72px;font-size:13.8px;line-height:13.8px;color:#000;left:846.00px;white-space:nowrap;letter-spacing:-0.26px;transform:scaleY(1.15);transform-origin:0 11.68px;">% Remise</div>
<div class="r" style="left:245.00px;top:40.00px;width:316.00px;height:754.20px;background:#f1f1f1;border:1px solid #c4c4c4;box-sizing:border-box;"></div>
<div class="r" style="left:248.90px;top:281.10px;width:307.80px;height:27.30px;background:#e3e3e3;"></div>
<div class="r" style="left:284.30px;top:487.00px;width:199.50px;height:29.80px;background:#eff06c;"></div>
<div class="t " style="top:50.57px;font-size:14.8px;line-height:14.8px;color:#000000;left:289.50px;letter-spacing:-0.021px;">Consultation Lignes (Maj+F12)</div>
<div class="r" style="left:284.00px;top:75.00px;width:273.00px;height:1.00px;background:#d5d5d5;"></div>
<div class="t " style="top:86.07px;font-size:14.8px;line-height:14.8px;color:#000000;left:289.50px;letter-spacing:-0.41px;">Détail (F8)</div>
<div class="t " style="top:113.87px;font-size:14.8px;line-height:14.8px;color:#000000;left:289.50px;letter-spacing:0.07px;">Consultation Inf. Techniques</div>
<div class="t " style="top:141.37px;font-size:14.8px;line-height:14.8px;color:#8d8d8d;left:289.50px;letter-spacing:-0.107px;">Historique (F10)</div>
<div class="t " style="top:169.07px;font-size:14.8px;line-height:14.8px;color:#8d8d8d;left:289.50px;letter-spacing:-0.217px;">Eléments Récents (Maj+F8)</div>
<div class="t " style="top:196.27px;font-size:14.8px;line-height:14.8px;color:#000000;left:289.50px;letter-spacing:-0.033px;">Historique Messages / Entité</div>
<div class="t " style="top:223.77px;font-size:14.8px;line-height:14.8px;color:#8d8d8d;left:289.50px;letter-spacing:-0.241px;">Envoyer un message</div>
<div class="r" style="left:284.00px;top:249.00px;width:273.00px;height:1.00px;background:#d5d5d5;"></div>
<div class="t " style="top:260.07px;font-size:14.8px;line-height:14.8px;color:#000000;left:289.50px;letter-spacing:-0.162px;">Nouvelle Tâche</div>
<div class="t " style="top:287.27px;font-size:14.8px;line-height:14.8px;color:#8d8d8d;left:289.50px;letter-spacing:-0.218px;">Tâches de l'Entité</div>
<div class="r" style="left:284.00px;top:313.00px;width:273.00px;height:1.00px;background:#d5d5d5;"></div>
<div class="t " style="top:324.07px;font-size:14.8px;line-height:14.8px;color:#000000;left:289.50px;letter-spacing:0.072px;">Joindre un document</div>
<div class="t " style="top:351.27px;font-size:14.8px;line-height:14.8px;color:#000000;left:289.50px;letter-spacing:-0.358px;">Documents GED</div>
<div class="r" style="left:284.00px;top:376.00px;width:273.00px;height:1.00px;background:#d5d5d5;"></div>
<div class="t " style="top:387.27px;font-size:14.8px;line-height:14.8px;color:#000000;left:289.50px;letter-spacing:-0.48px;">Accès à ...</div>
<svg class="r" style="left:538px;top:388.2px;" width="10" height="12" viewBox="0 0 10 12"><path d="M2.5 1.5 L7.5 6 L2.5 10.5" stroke="#606060" stroke-width="1.4" fill="none"/></svg>
<div class="r" style="left:284.00px;top:413.00px;width:273.00px;height:1.00px;background:#d5d5d5;"></div>
<div class="t " style="top:423.57px;font-size:14.8px;line-height:14.8px;color:#000000;left:289.50px;letter-spacing:-0.048px;">Edition Facture (Ctrl+P)</div>
<div class="r" style="left:284.00px;top:449.00px;width:273.00px;height:1.00px;background:#d5d5d5;"></div>
<div class="t " style="top:460.07px;font-size:14.8px;line-height:14.8px;color:#000000;left:289.50px;letter-spacing:0.1px;">Annulation Validation Facture</div>
<div class="r" style="left:284.00px;top:485.00px;width:273.00px;height:1.00px;background:#d5d5d5;"></div>
<div class="t " style="top:496.77px;font-size:14.8px;line-height:14.8px;color:#000000;left:289.50px;letter-spacing:0.03px;">Génération Avoir sur Produit</div>
<div class="t " style="top:524.07px;font-size:14.8px;line-height:14.8px;color:#000000;left:289.50px;letter-spacing:-0.068px;">Avoirs Facture Courante</div>
<div class="r" style="left:284.00px;top:549.00px;width:273.00px;height:1.00px;background:#d5d5d5;"></div>
<div class="t " style="top:560.27px;font-size:14.8px;line-height:14.8px;color:#000000;left:289.50px;letter-spacing:0.05px;">Règlement Total</div>
<div class="t " style="top:587.57px;font-size:14.8px;line-height:14.8px;color:#000000;left:289.50px;letter-spacing:-0.194px;">Gestion Règlements</div>
<div class="r" style="left:284.00px;top:613.00px;width:273.00px;height:1.00px;background:#d5d5d5;"></div>
<div class="t " style="top:623.77px;font-size:14.8px;line-height:14.8px;color:#000000;left:289.50px;letter-spacing:-0.137px;">Ma Présentation de Démarrage</div>
<div class="t " style="top:651.27px;font-size:14.8px;line-height:14.8px;color:#000000;left:289.50px;letter-spacing:-0.1px;">Actualiser la Présentation</div>
<div class="t " style="top:678.57px;font-size:14.8px;line-height:14.8px;color:#000000;left:289.50px;letter-spacing:-0.233px;">Présentations</div>
<svg class="r" style="left:538px;top:679.5px;" width="10" height="12" viewBox="0 0 10 12"><path d="M2.5 1.5 L7.5 6 L2.5 10.5" stroke="#606060" stroke-width="1.4" fill="none"/></svg>
<div class="r" style="left:284.00px;top:704.00px;width:273.00px;height:1.00px;background:#d5d5d5;"></div>
<div class="t " style="top:715.27px;font-size:14.8px;line-height:14.8px;color:#000000;left:289.50px;letter-spacing:-0.04px;">Définition Filtres et Tris</div>
<div class="t " style="top:742.57px;font-size:14.8px;line-height:14.8px;color:#000000;left:289.50px;letter-spacing:-0.248px;">Sélections Filtres et Tris</div>
<svg class="r" style="left:538px;top:743.5px;" width="10" height="12" viewBox="0 0 10 12"><path d="M2.5 1.5 L7.5 6 L2.5 10.5" stroke="#606060" stroke-width="1.4" fill="none"/></svg>
<div class="t " style="top:769.77px;font-size:14.8px;line-height:14.8px;color:#000000;left:289.50px;letter-spacing:0.059px;">Condition par Défaut (Ctrl-F5)</div>
</body></html>
